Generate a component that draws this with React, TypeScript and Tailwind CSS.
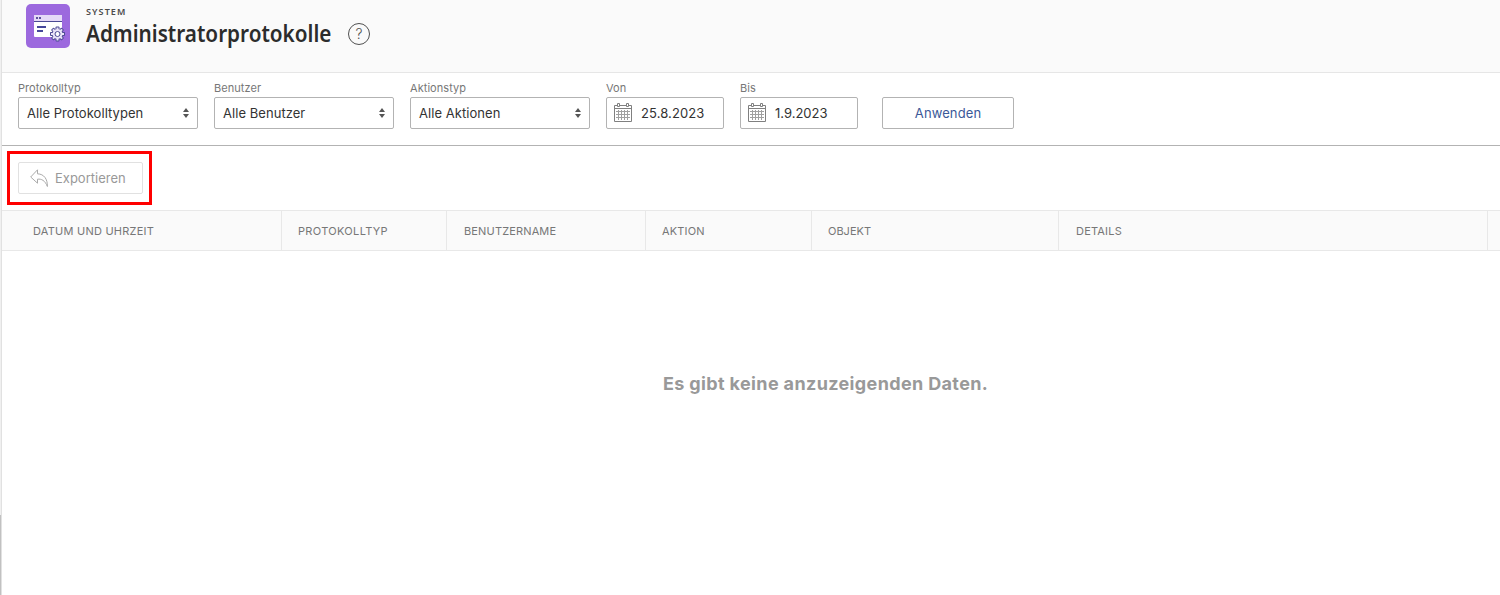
import type { ReactNode } from 'react';

const teeth = [0, 45, 90, 135, 180, 225, 270, 315];

function AppIcon() {
  return (
    <svg className="block h-11 w-11" viewBox="0 0 44 44">
      <rect width="44" height="44" rx="5" fill="#9c69de" />
      <rect x="8" y="11" width="28" height="22" rx="1" fill="#fff" />
      <path d="M8 11h28v6H8z" fill="#e5d9f7" />
      <path d="M8 17h28v1H8z" fill="#4b4a93" />
      <path d="M10 13h2v2h-2zM13 13h2v2h-2z" fill="#5c519d" />
      <path d="M11 22h9v2h-9zM11 26h6v2h-6z" fill="#45479a" />
      <g transform="translate(31.5 30)">
        <circle r="5.700" fill="#4d4a94" />
        {teeth.map(a => <rect key={a} x="-1.900" y="-7.500" width="3.800" height="4" rx=".8" fill="#4d4a94" transform={`rotate(${a})`} />)}
        <circle r="4.900" fill="#e9e2f8" />
        {teeth.map(a => <rect key={a} x="-1" y="-6.500" width="2" height="3" fill="#e9e2f8" transform={`rotate(${a})`} />)}
        <circle r="2.500" fill="#fff" stroke="#4d4a94" strokeWidth="1" />
      </g>
    </svg>
  );
}

function CalendarIcon() {
  return (
    <svg className="-ml-px block h-[20px] w-[18px] shrink-0" viewBox="0 0 18 20" fill="none" stroke="#808080">
      <path d="M3 2.500H.5v16h17v-16H15M6 2.500h6M.5 5.500h17" />
      <path d="M3.500.5h2v3h-2zM12.500.5h2v3h-2z" />
      <path d="M2 8.500h14M2 11.500h14M2 14.500h14M4.500 7v10M7.500 7v10M10.500 7v10M13.500 7v10" stroke="#a0a0a0" />
    </svg>
  );
}

function Field({ label, width, children }: { label: string; width: string; children: ReactNode }) {
  return (
    <div className={width}>
      <div className="h-4 text-[11px] leading-4 tracking-[0.05px] text-[#777]">{label}</div>
      <div className="mt-px flex h-8 items-center rounded-[2px] border border-[#b3b3b3] px-2 text-[13px] text-[#333]">{children}</div>
    </div>
  );
}

function Select({ label, value }: { label: string; value: string }) {
  return (
    <Field label={label} width="w-[180px]">
      <span className="grow pt-0.5 tracking-[0.05px]">{value}</span>
      <svg className="h-[10px] w-[6px]" viewBox="0 0 6 10" fill="#555"><path d="M3 0l3 4H0zM0 6h6L3 10z" /></svg>
    </Field>
  );
}

const columns = [
  { label: 'DATUM UND UHRZEIT', style: 'w-[280px] pl-[31px]', tracking: 'tracking-[0.24px]' },
  { label: 'PROTOKOLLTYP', style: 'w-[165px] pl-4', tracking: 'tracking-[0.33px]' },
  { label: 'BENUTZERNAME', style: 'w-[199px] pl-[17px]', tracking: 'tracking-[0.15px]' },
  { label: 'AKTION', style: 'w-[166px] pl-4', tracking: 'tracking-[0.15px]' },
  { label: 'OBJEKT', style: 'w-[247px] pl-4', tracking: 'tracking-normal' },
  { label: 'DETAILS', style: 'w-[429px] pl-[17px]', tracking: 'tracking-[0.2px]' },
];

export default function App() {
  return (
    <div className="flex h-[595px] w-[1500px] overflow-hidden bg-white font-['Inter',sans-serif]">
      <div className="flex w-px flex-col bg-[#f0f0f0]"><div className="mt-[515px] h-20 bg-[#c1c1c1]" /></div>
      <main className="flex w-[1499px] flex-col border-l border-[#e1e1e1]">
        <header className="flex h-[73px] shrink-0 border-b border-[#e6e6e6] bg-[#fafafa] pl-6 pt-1">
          <AppIcon />
          <div className="ml-4 w-[246px] font-['Noto_Sans','Open_Sans',sans-serif]">
            <div className="h-4 text-[9px] font-semibold leading-4 tracking-[1.1px] text-[#4b4b4b]">SYSTEM</div>
            <h1 className="-mt-px w-max origin-left scale-x-[0.9] whitespace-nowrap text-[23px] font-semibold leading-7 text-[#2c2c2c]">Administratorprotokolle</h1>
          </div>
          <div className="ml-4 mt-[19px] flex h-[22px] w-[22px] items-center justify-center rounded-full border border-[#505050] text-sm font-light text-[#505050]">?</div>
        </header>
        <section className="flex h-[73px] shrink-0 gap-4 border-b border-[#b3b3b3] pl-4 pt-[7px]">
          <Select label="Protokolltyp" value="Alle Protokolltypen" />
          <Select label="Benutzer" value="Alle Benutzer" />
          <Select label="Aktionstyp" value="Alle Aktionen" />
          <Field label="Von" width="w-[118px]"><CalendarIcon /><span className="ml-[9px] pt-0.5 tracking-[0.1px]">25.8.2023</span></Field>
          <Field label="Bis" width="w-[118px]"><CalendarIcon /><span className="ml-[9px] pt-0.5">1.9.2023</span></Field>
          <button className="ml-2 mt-[17px] h-8 w-[132px] rounded-[2px] border border-[#b3b3b3] pt-0.5 text-[13px] tracking-[0.1px] text-[#3b5998]">Anwenden</button>
        </section>
        <section className="h-16 shrink-0 pl-[5px] pt-[5px]">
          <div className="h-[54px] w-[145px] border-[3px] border-[#f00] p-2">
            <button className="flex h-8 w-[125px] items-center rounded-[2px] border border-[#e1e1e1] pl-[11px] text-[13px] text-[#999]">
              <svg className="mr-[7px] h-[18px] w-[18px] shrink-0" viewBox="0 0 18 18" fill="none" stroke="#aaa"><path d="M7.500.8L.7 8l6.800 6.200v-4c4-.5 7.500 1.200 9.900 7.300.2-7.500-3.400-12.500-9.900-12.700z" /></svg>
              <span className="pt-0.5">Exportieren</span>
            </button>
          </div>
        </section>
        <div className="flex h-[41px] shrink-0 border-y border-[#e8e8e8] bg-[#fafafa] text-[11px] text-[#777]">
          {columns.map(c => <div key={c.label} className={`flex shrink-0 items-center border-r border-[#e8e8e8] ${c.style}`}><span className={`pt-0.5 ${c.tracking}`}>{c.label}</span></div>)}
        </div>
        <div className="pl-[661px] pt-[119px] text-[18px] font-bold leading-7 tracking-[0.36px] text-[#999]">Es gibt keine anzuzeigenden Daten.</div>
      </main>
    </div>
  );
}
